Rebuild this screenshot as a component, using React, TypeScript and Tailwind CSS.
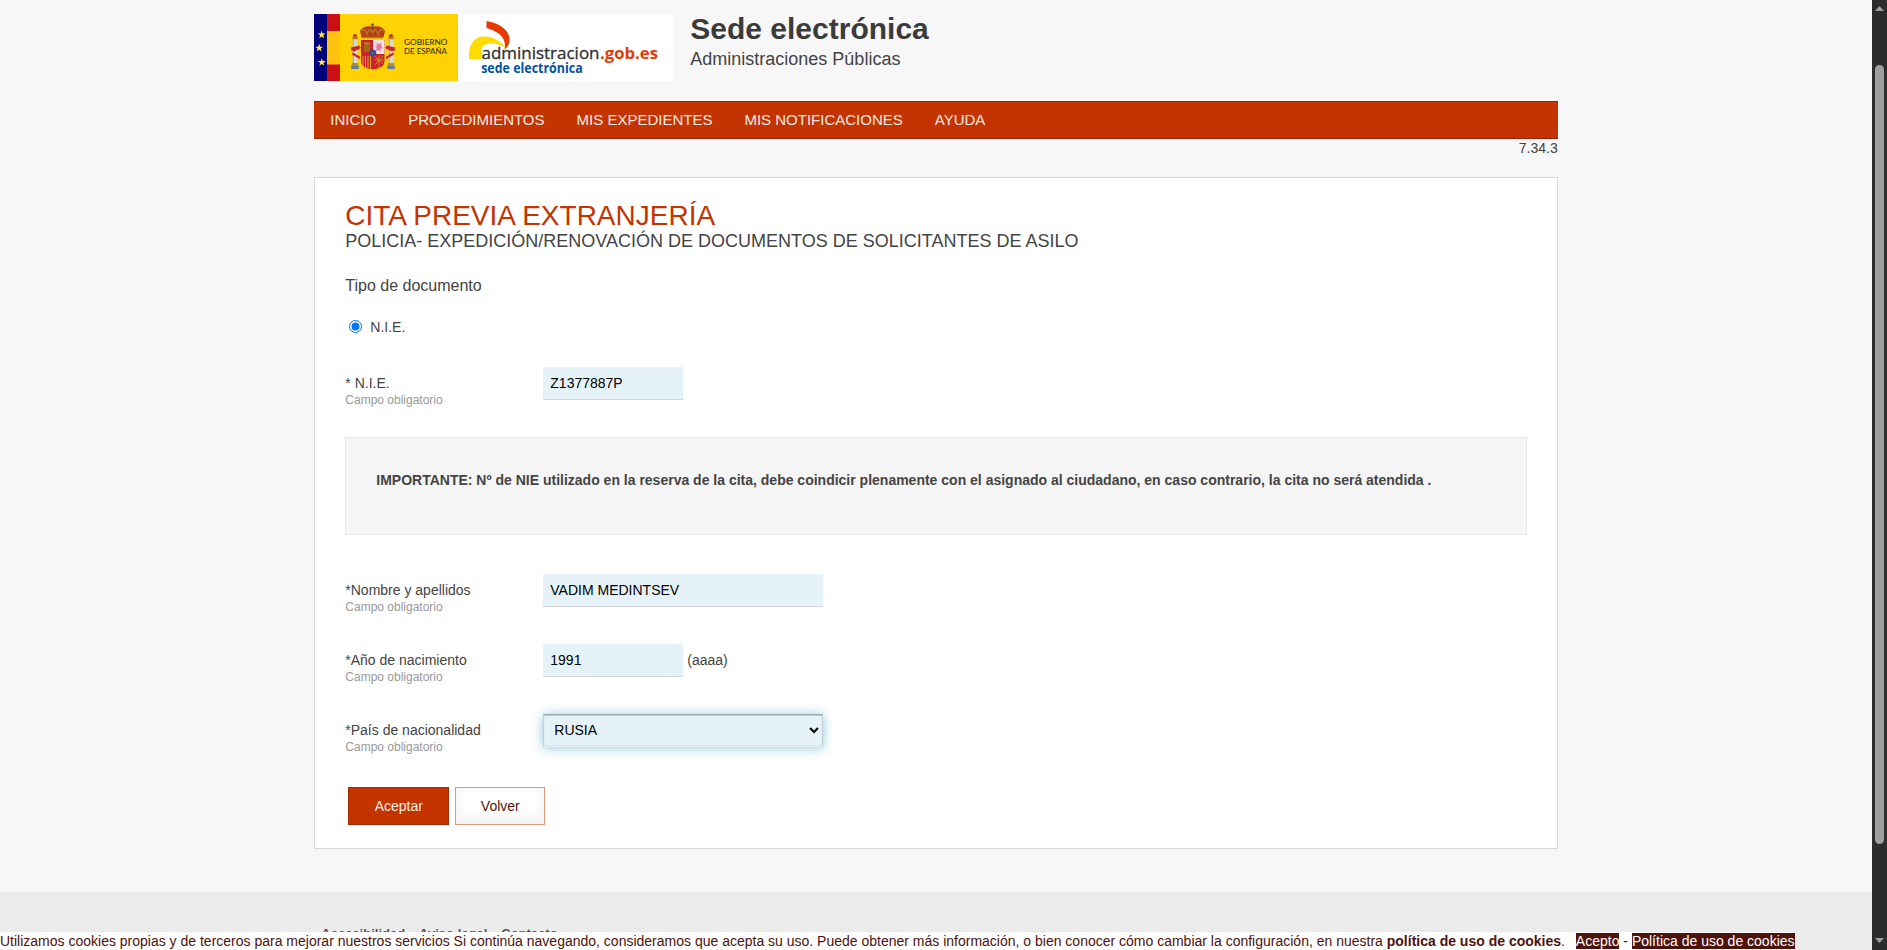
import type { ReactNode } from "react";

const NAV = ["INICIO", "PROCEDIMIENTOS", "MIS EXPEDIENTES", "MIS NOTIFICACIONES", "AYUDA"];
const FOOTER = ["Accesibilidad", "Aviso legal", "Contacto"];
const FIELD =
  "h-[33px] border-b border-[#d3d6d8] bg-[#e5f3f8] pl-[7px] text-[14px] leading-[16px] text-black outline-none";
const STAR = "M0,-4.2 L1,-1.3 L4,-1.3 L1.6,0.5 L2.5,3.4 L0,1.7 L-2.5,3.4 L-1.6,0.5 L-4,-1.3 L-1,-1.3Z";

function Pillar({ x }: { x: number }) {
  return (
    <g transform={`translate(${x} 0)`}>
      <rect x="-2.6" y="22.5" width="5.2" height="3" fill="#b57a16" />
      <rect x="-1.7" y="20.3" width="3.4" height="2.4" fill="#a8231b" />
      <rect x="-2.2" y="25.5" width="4.4" height="25" fill="#dcd8d2" />
      <rect x="-2.2" y="25.5" width="1" height="25" fill="#a7a8a4" />
      <rect x="-3.2" y="49" width="6.4" height="2.4" fill="#b98b2d" />
      <rect x="-3.8" y="51.4" width="7.6" height="3.6" fill="#5f7f9c" />
    </g>
  );
}

function Logo() {
  return (
    <svg width="360" height="67" viewBox="0 0 360 67" className="block shrink-0">
      <rect width="360" height="67" fill="#fff" />
      <rect width="13" height="67" fill="#00007b" />
      <rect x="13" width="13" height="67" fill="#cc0f14" />
      <rect x="13" y="17" width="13" height="33.5" fill="#ffc20e" />
      <rect x="26" width="118" height="67" fill="#ffd203" />
      <g fill="#ffec3d">
        <path d={STAR} transform="translate(7.7 20.8)" />
        <path d={STAR} transform="translate(5.2 34)" />
        <path d={STAR} transform="translate(7.8 48.4)" />
      </g>
      <Pillar x={41} />
      <Pillar x={77} />
      <path d="M37 33.5 L45 31.5 L47 34 L40 37.5 L37 36Z M81 33.5 L73 31.5 L71 34 L78 37.5 L81 36Z" fill="#c8262a" />
      <path d="M38.5 39.5 L46 44 M79.5 39.5 L72 44" stroke="#c8262a" strokeWidth="2.2" />
      <path d="M47.5 23.5 L46 17 Q49 11 58.5 12.5 Q68 11 71 17 L69.5 23.5Z" fill="#bd3a1b" />
      <path d="M48 23.5 H69 M47 17 Q51 14 53 20 Q56 12 58.5 19 Q61 12 64 20 Q66 14 70 17" fill="none" stroke="#a97b17" strokeWidth="1.5" />
      <path d="M58.5 9 V15 M56.8 10.8 H60.2" stroke="#6b531d" strokeWidth="1.2" />
      <path d="M47 26 H70.5 V48 Q70 54 58.7 55.5 Q47.5 54 47 48Z" fill="#c9222b" />
      <path d="M59 26 H70.5 V40 H59Z" fill="#f0dfe3" />
      <path d="M50 29 H56 V38 H50Z" fill="#9c6a14" />
      <path d="M51 30.5 V28 M53 30.5 V28 M55 30.5 V28" stroke="#c99721" />
      <path d="M62 29 L65 30 L67.5 28.5 L67 32 L69 34 L66 35 L67 38 L64 36 L61 38 L63 34 L61 32 L63.5 32Z" fill="#dd7fa2" />
      <path d="M49 42 V52 M51.5 42 V53.5 M54 42 V54 M56.5 42 V55" stroke="#e0a12b" />
      <path d="M61 42 L69 50 M69 42 L61 51 M61 46 H70 M65 41 V54" stroke="#d19124" strokeWidth="0.9" />
      <circle cx="58.8" cy="39" r="3.5" fill="#2a4f95" />
      <circle cx="58.8" cy="39" r="1.3" fill="#b64b35" />
      <g fontFamily="Lato, sans-serif" fontSize="8.4" fontWeight="500" fill="#40370b">
        <text x="90" y="31.3" textLength="43.5" lengthAdjust="spacingAndGlyphs">GOBIERNO</text>
        <text x="90" y="39.8" textLength="43" lengthAdjust="spacingAndGlyphs">DE ESPAÑA</text>
      </g>
      <path d="M172.5 7 C184 9 195.5 15 195.5 26 C195.3 31 193 33.5 190.5 35.5 C193 26 187 18 172.5 14Z" fill="#e63a05" />
      <path d="M155 45 C154 31 160 23 169 22.5 C178 22 187 27 191.5 33.5 C184 29 175 28.5 170.5 31 C166.5 33.5 168 34 168 45Z" fill="#ffdc00" />
      <g fontFamily="'Open Sans', 'Noto Sans', sans-serif">
        <text x="167.5" y="45" fontSize="16.5" fontWeight="500" fill="#303030" stroke="#303030" strokeWidth="0.3" textLength="118" lengthAdjust="spacingAndGlyphs">administracion</text>
        <text x="286" y="45" fontSize="16.5" fontWeight="700" fill="#e63a05" textLength="58" lengthAdjust="spacingAndGlyphs">.gob.es</text>
        <text x="167.2" y="58.8" fontSize="13.3" fontWeight="700" fill="#0054a0" textLength="101.5" lengthAdjust="spacingAndGlyphs">sede electrónica</text>
      </g>
    </svg>
  );
}

function Row({ label, children }: { label: string; children: ReactNode }) {
  return (
    <div className="flex h-[70px] items-start">
      <label className="w-[198px] pt-2 text-[14px] leading-[16px]">
        {label}
        <span className="block pt-[2px] text-[12px] leading-[14px] text-[#999]">Campo obligatorio</span>
      </label>
      {children}
    </div>
  );
}

function Scrollbar() {
  return (
    <div className="flex h-full w-[15px] shrink-0 flex-col items-center bg-[#2c2c2c]">
      <svg width="15" height="65" viewBox="0 0 15 65">
        <path d="M3 11 L7.5 6 L12 11Z" fill="#9f9f9f" />
      </svg>
      <div className="h-[779px] w-[9px] rounded-full bg-[#9f9f9f]" />
      <svg width="15" height="106" viewBox="0 0 15 106">
        <path d="M3 94 L12 94 L7.5 99Z" fill="#9f9f9f" />
      </svg>
    </div>
  );
}

export default function App() {
  return (
    <div className="relative flex h-[950px] w-[1887px] overflow-hidden bg-[#f7f7f7] font-['Liberation_Sans',Arial,sans-serif] text-[14px] leading-[16px] text-[#444]">
      <div className="flex h-full w-[1872px] flex-col">
        <div className="mx-auto w-[1243.4px]">
          <header className="flex h-[101px] pt-[14px]">
            <Logo />
            <div className="pl-4">
              <p className="-mt-[2px] text-[30px] leading-[34px] font-bold text-[#3b3b3b]">Sede electrónica</p>
              <p className="pt-[3px] text-[18px] leading-[20px]">Administraciones Públicas</p>
            </div>
          </header>
          <nav className="flex h-[38px] items-center gap-8 border-y border-[#952700] bg-[#c33400] px-4 pb-[1px] text-[15px] leading-[17px] text-[#f9e9e3]">
            {NAV.map((n) => (
              <a key={n}>{n}</a>
            ))}
          </nav>
          <p className="h-[38px] pt-[1px] text-right">7.34.3</p>
          <main className="h-[672px] border border-[#d8d8d8] bg-white px-[30px]">
            <h1 className="pt-[22px] text-[28px] leading-[32px] text-[#c33400]">CITA PREVIA EXTRANJERÍA</h1>
            <h2 className="-mt-px text-[18px] leading-[20px]">POLICIA- EXPEDICIÓN/RENOVACIÓN DE DOCUMENTOS DE SOLICITANTES DE ASILO</h2>
            <p className="pt-[26px] text-[16px] leading-[18px]">Tipo de documento</p>
            <div className="flex h-[72px] items-start pt-[24px]">
              <input type="radio" defaultChecked className="mx-1 mt-[1px] h-[13px] w-[13px]" />
              <span className="pl-1">N.I.E.</span>
            </div>
            <Row label="* N.I.E.">
              <input className={FIELD + " w-[140px]"} defaultValue="Z1377887P" />
            </Row>
            <div className="h-[98px] border border-[#e9e9e9] bg-[#f5f5f5] px-[30px] pt-[34px] font-bold">
              IMPORTANTE: Nº de NIE utilizado en la reserva de la cita, debe coindicir plenamente con el asignado al
              ciudadano, en caso contrario, la cita no será atendida .
            </div>
            <div className="pt-[39px]">
              <Row label="*Nombre y apellidos">
                <input className={FIELD + " w-[280px]"} defaultValue="VADIM MEDINTSEV" />
              </Row>
              <Row label="*Año de nacimiento">
                <input className={FIELD + " w-[140px]"} defaultValue="1991" />
                <span className="pt-2 pl-1">(aaaa)</span>
              </Row>
              <Row label="*País de nacionalidad">
                <select
                  className="h-[33px] w-[280px] rounded-none border border-t-[#97abb1] border-x-[#c3d0d4] border-b-[#e5f3f8] bg-[#e5f3f8] pr-[5px] pb-[1px] pl-[6px] text-[14px] text-black shadow-[0_1px_12px_#8fc8da,inset_0_1px_1px_#b9cbd1,inset_0_-1px_0_#d9e4e8] outline-none"
                  defaultValue="RUSIA"
                >
                  <option>RUSIA</option>
                </select>
              </Row>
            </div>
            <div className="flex gap-[6px] pt-[3px] pl-[3px]">
              <button className="h-[38px] w-[101px] border border-[#a82c00] bg-[#c33400] text-[#fcefea]">Aceptar</button>
              <button className="h-[38px] w-[90px] border border-[#df9880] bg-white text-[#5a1206] shadow-[inset_0_-5px_14px_#f0f0f0]">
                Volver
              </button>
            </div>
          </main>
        </div>
        <footer className="mt-[43px] flex-1 bg-[#ebebeb]">
          <div className="mx-auto flex w-[1243.4px] gap-[14px] pt-[34px] pl-[7px] text-[13px] leading-[16px] font-bold text-[#555]">
            {FOOTER.map((f) => (
              <a key={f}>{f}</a>
            ))}
          </div>
        </footer>
      </div>
      <Scrollbar />
      <div className="absolute bottom-0 left-0 h-[18px] w-fit bg-white pt-[1px] whitespace-pre text-[#4e120b]">
        Utilizamos cookies propias y de terceros para mejorar nuestros servicios Si continúa navegando, consideramos que
        {" "}acepta su uso. Puede obtener más información, o bien conocer cómo cambiar la configuración, en nuestra{" "}
        <b>política de uso de cookies</b>.{"   "}
        <a className="bg-[#4e120b] text-white">Acepto</a> - <a className="bg-[#4e120b] text-white">Política de uso de cookies</a>
      </div>
    </div>
  );
}
